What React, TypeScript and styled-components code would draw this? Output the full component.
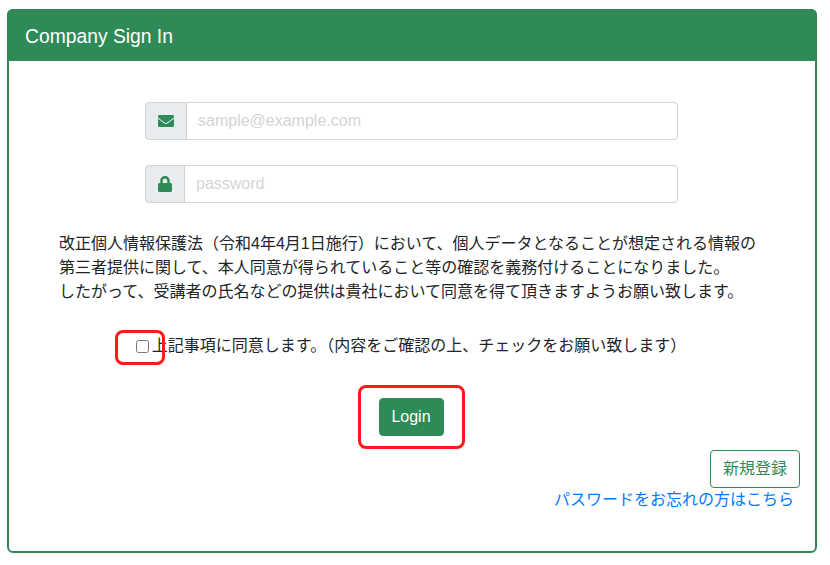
import React from 'react'
import styled, { createGlobalStyle } from 'styled-components'
import { FaEnvelope, FaLock } from 'react-icons/fa'

const green = '#2e8b57'

const GlobalStyle = createGlobalStyle`
  html, body {
    margin: 0;
    padding: 0;
    background: #fff;
  }
  body {
    font-family: "Liberation Sans", "Noto Sans CJK JP", sans-serif;
    font-size: 16px;
    line-height: 24px;
    color: #212529;
  }
`

const Page = styled.div`
  padding: 9px 13px 0 7px;
`

const Card = styled.div`
  height: 544px;
  box-sizing: border-box;
  border: 2px solid ${green};
  border-radius: 6px;
  display: flex;
  flex-direction: column;
`

const CardHeader = styled.div`
  margin: -2px -2px 0;
  height: 52px;
  flex: none;
  box-sizing: border-box;
  display: flex;
  align-items: center;
  padding: 3px 18px 0;
  background: ${green};
  border-radius: 6px 6px 0 0;
  color: #fff;
  font-size: 19.3px;
`

const CardBody = styled.div`
  flex: 1;
  display: flex;
  flex-direction: column;
  padding: 41px 15px 0 16px;
`

const InputGroup = styled.div`
  display: flex;
  width: 533px;
  height: 38px;
  margin: 0 0 25px 120px;
  box-sizing: border-box;
`

const Addon = styled.div<{ $width: number }>`
  width: ${p => p.$width}px;
  flex: none;
  box-sizing: border-box;
  display: flex;
  align-items: center;
  justify-content: center;
  background: #e9ecef;
  border: 1px solid #ced4da;
  border-radius: 4px 0 0 4px;
  color: ${green};
  font-size: 16px;
`

const Input = styled.input`
  flex: 1;
  min-width: 0;
  box-sizing: border-box;
  margin-left: -1px;
  padding: 6px 11px;
  border: 1px solid #ced4da;
  border-radius: 0 4px 4px 0;
  font: inherit;
  outline: none;
  &::placeholder {
    color: #d3d5d8;
  }
`

const Notice = styled.p`
  margin: 4px 0 0 34px;
`

const AgreeRow = styled.label`
  position: relative;
  display: flex;
  justify-content: center;
  align-items: center;
  margin-top: 30px;
  padding-right: 3px;
`

const Check = styled.input`
  width: 13px;
  height: 13px;
  margin: 0 3px 0 0;
`

const Mark = styled.span`
  position: absolute;
  box-sizing: border-box;
  border: 3px solid #ff1a1a;
  border-radius: 8px;
`

const CheckMark = styled(Mark)`
  left: 90px;
  top: -4px;
  width: 50px;
  height: 35px;
`

const LoginRow = styled.div`
  position: relative;
  display: flex;
  justify-content: center;
  margin-top: 40px;
  padding-right: 3px;
`

const LoginMark = styled(Mark)`
  left: 333px;
  top: -13px;
  width: 107px;
  height: 64px;
`

const LoginButton = styled.button`
  width: 65px;
  height: 38px;
  padding: 0;
  background: ${green};
  border: 1px solid ${green};
  border-radius: 4px;
  color: #fff;
  font: inherit;
`

const Footer = styled.div`
  display: flex;
  flex-direction: column;
  align-items: flex-end;
  margin-top: 14px;
`

const RegisterButton = styled.a`
  width: 90px;
  height: 38px;
  box-sizing: border-box;
  display: flex;
  align-items: center;
  justify-content: center;
  border: 1px solid ${green};
  border-radius: 4px;
  color: ${green};
`

const ForgotLink = styled.a`
  margin: 0 6px 0 0;
  color: #007bff;
  line-height: 24px;
`

export default function App() {
  return (
    <Page>
      <GlobalStyle />
      <Card>
        <CardHeader>Company Sign In</CardHeader>
        <CardBody>
          <InputGroup>
            <Addon $width={42}><FaEnvelope /></Addon>
            <Input type="text" placeholder="sample@example.com" />
          </InputGroup>
          <InputGroup>
            <Addon $width={40}><FaLock /></Addon>
            <Input type="password" placeholder="password" />
          </InputGroup>
          <Notice>
            改正個人情報保護法（令和4年4月1日施行）において、個人データとなることが想定される情報の<br />
            第三者提供に関して、本人同意が得られていること等の確認を義務付けることになりました。<br />
            したがって、受講者の氏名などの提供は貴社において同意を得て頂きますようお願い致します。
          </Notice>
          <AgreeRow>
            <Check type="checkbox" />
            上記事項に同意します。（内容をご確認の上、チェックをお願い致します）
            <CheckMark />
          </AgreeRow>
          <LoginRow>
            <LoginButton type="button">Login</LoginButton>
            <LoginMark />
          </LoginRow>
          <Footer>
            <RegisterButton>新規登録</RegisterButton>
            <ForgotLink>パスワードをお忘れの方はこちら</ForgotLink>
          </Footer>
        </CardBody>
      </Card>
    </Page>
  )
}
